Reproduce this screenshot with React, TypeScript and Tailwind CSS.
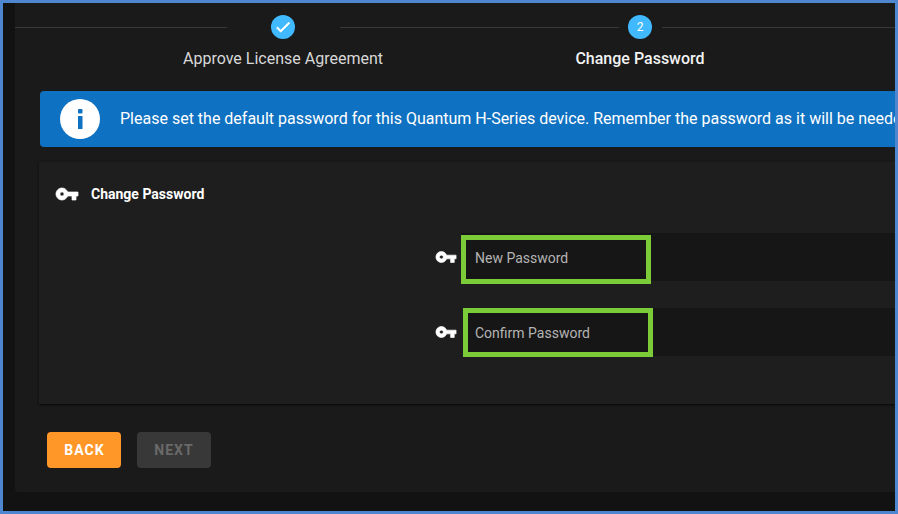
import React from "react";

function KeyIcon({ className }: { className: string }) {
  return (
    <svg
      viewBox="0 0 24 24"
      fill="currentColor"
      stroke="currentColor"
      strokeWidth="0.7"
      className={className}
    >
      <path d="M12.65 10C11.83 7.67 9.61 6 7 6c-3.31 0-6 2.69-6 6s2.69 6 6 6c2.61 0 4.83-1.67 5.65-4H17v4h4v-4h2v-4H12.65zM7 14c-1.1 0-2-.9-2-2s.9-2 2-2 2 .9 2 2-.9 2-2 2z" />
    </svg>
  );
}

function Step({
  width,
  label,
  active,
  children,
}: {
  width: string;
  label: string;
  active?: boolean;
  children: React.ReactNode;
}) {
  return (
    <div className={`flex flex-col items-center shrink-0 ${width}`}>
      <div className="w-6 h-6 rounded-full bg-[#40b9ff] flex items-center justify-center text-white text-xs">
        {children}
      </div>
      <div
        className={`mt-[7px] whitespace-nowrap text-base leading-[26px] ${
          active ? "font-medium text-[#f2f2f2]" : "font-normal text-[#d8d8d8]"
        }`}
      >
        {label}
      </div>
    </div>
  );
}

function PasswordField({
  label,
  fieldClass,
  boxClass,
}: {
  label: string;
  fieldClass: string;
  boxClass: string;
}) {
  return (
    <div className="flex items-center h-12">
      <KeyIcon className="w-[22px] h-[22px] text-white shrink-0 -ml-px" />
      <div
        className={`relative flex-1 h-12 bg-[#161616] flex items-center pt-[2px] text-sm text-[#b4b4b4] ${fieldClass}`}
      >
        {label}
        <div className={`absolute left-0 w-[190px] border-[5px] border-[#7ccc3a] ${boxClass}`} />
      </div>
    </div>
  );
}

export default function App() {
  return (
    <div
      className="w-[898px] h-[514px] overflow-hidden border-[3px] border-[#4f86d0] bg-[#121212] pl-3 pb-[19px] text-white"
      style={{ fontFamily: "Roboto, sans-serif" }}
    >
      <div className="h-full bg-[#1a1a1a] rounded-bl flex flex-col overflow-hidden pt-3">
        <div className="flex items-start h-[76px]">
          <div className="w-[212px] h-px bg-[#383838] mt-3 shrink-0" />
          <Step width="w-[112px]" label="Approve License Agreement">
            <svg
              viewBox="0 0 24 24"
              fill="currentColor"
              stroke="currentColor"
              strokeWidth="1"
              className="w-[18px] h-[18px]"
            >
              <path d="M9 16.17L4.83 12l-1.42 1.41L9 19 21 7l-1.41-1.41z" />
            </svg>
          </Step>
          <div className="w-[279px] ml-px h-px bg-[#383838] mt-3 shrink-0" />
          <Step width="w-[42px]" label="Change Password" active>
            2
          </Step>
          <div className="flex-1 ml-px h-px bg-[#383838] mt-3" />
        </div>

        <div className="ml-[25px] h-14 shrink-0 bg-[#0f71c1] rounded-l flex items-center pl-5 overflow-hidden">
          <div className="w-10 h-10 rounded-full bg-white shrink-0 flex items-center justify-center">
            <svg viewBox="0 0 40 40" className="w-10 h-10 text-[#0f71c1]" fill="currentColor">
              <rect x="18" y="10" width="4.5" height="4.5" rx="1" />
              <rect x="18" y="17" width="4.5" height="13" />
            </svg>
          </div>
          <span className="ml-5 text-base font-normal whitespace-nowrap text-white">
            Please set the default password for this Quantum H-Series device. Remember the password as it will be needed
          </span>
        </div>

        <div className="ml-6 mt-[15px] h-[242px] shrink-0 bg-[#1e1e1e] shadow-[0_1px_2px_rgba(0,0,0,0.7)] pt-[71px] pl-[397px] relative">
          <div className="absolute left-[16px] top-5 flex items-center">
            <KeyIcon className="w-6 h-6 text-white" />
            <span className="ml-[12px] text-sm font-bold">Change Password</span>
          </div>
          <PasswordField
            label="New Password"
            fieldClass="ml-[4px] pl-[14px]"
            boxClass="top-[2px] h-[49px]"
          />
          <div className="h-[27px]" />
          <PasswordField
            label="Confirm Password"
            fieldClass="ml-[6px] pl-[12px]"
            boxClass="top-0 h-[49px]"
          />
        </div>

        <div className="flex gap-4 ml-8 mt-7">
          <button className="w-[74px] h-9 rounded bg-[#ff9628] text-sm font-bold tracking-[1px] pl-px text-[#fff]">
            BACK
          </button>
          <button className="w-[74px] h-9 rounded bg-[#383838] text-sm font-bold tracking-[1px] text-[#696969]">
            NEXT
          </button>
        </div>
      </div>
    </div>
  );
}
